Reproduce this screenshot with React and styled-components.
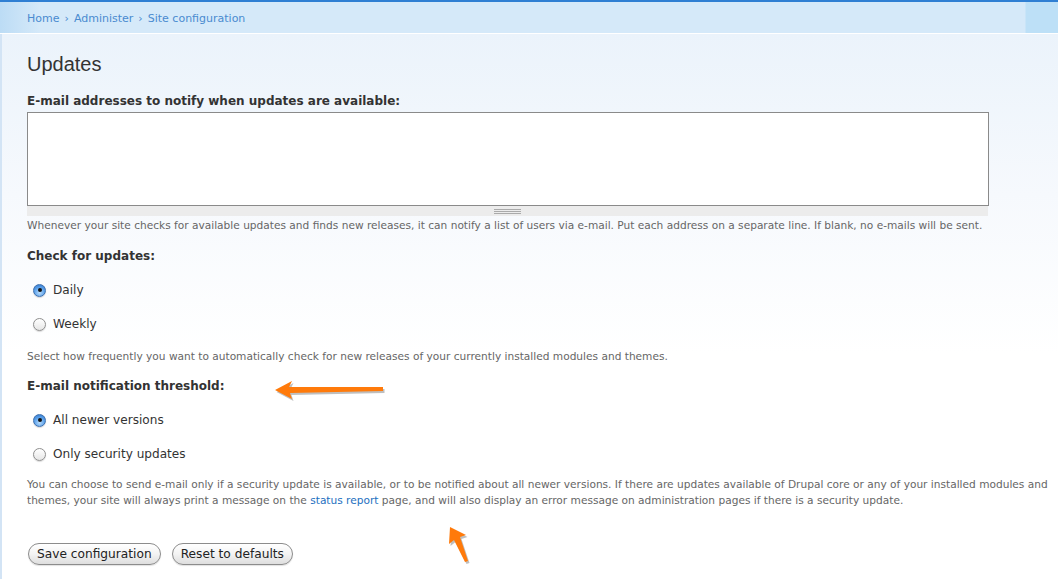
import styled, { createGlobalStyle } from "styled-components";

const GlobalStyle = createGlobalStyle`
  body {
    margin: 0;
    background: #fff;
    font-family: "DejaVu Sans", Verdana, sans-serif;
    color: #333;
  }
`;

const Page = styled.div`
  position: relative;
  min-height: 577px;
  border-top: 2px solid #2f7fd3;
  overflow: hidden;
`;

const Crumbs = styled.div`
  height: 30px;
  display: flex;
  align-items: center;
  padding: 1px 0 0 27px;
  border-bottom: 1px solid #fff;
  background: linear-gradient(
    to right,
    #bcdcf5 0,
    #d5e9f9 40px,
    #d5e9f9 1025px,
    #bde0f7 1026px
  );
  font-size: 11px;
  color: #4a8bd0;

  span {
    margin: 0 5px;
  }
`;

const Main = styled.div`
  border-left: 2px solid #d3e4f5;
  padding: 18px 0 20px 25px;
  min-height: 500px;
  background: linear-gradient(#ebf3fb 0, #f6f9fd 160px, #fff 320px);
`;

const Title = styled.h1`
  margin: 0 0 17px;
  font-family: "Liberation Sans", Arial, sans-serif;
  font-weight: normal;
  font-size: 20px;
  line-height: 24px;
  color: #333;
`;

const Label = styled.div`
  font-size: 12px;
  font-weight: bold;
  line-height: 16px;
  color: #333;
  margin-top: ${(p) => p.$top || 0}px;
`;

const TextArea = styled.textarea`
  display: block;
  box-sizing: border-box;
  width: 962px;
  height: 94px;
  margin: 3px 0 0;
  border: 1px solid #8a8a8a;
  background: #fff;
  resize: none;
  outline: none;
`;

const Grippie = styled.div`
  width: 961px;
  height: 10px;
  background: #ececec;
  display: flex;
  justify-content: center;
  align-items: center;

  &::after {
    content: "";
    width: 27px;
    height: 5px;
    border-top: 1px solid #aaa;
    border-bottom: 1px solid #aaa;
    background: linear-gradient(#ececec 1px, #aaa 1px, #aaa 2px, #ececec 2px);
    box-sizing: border-box;
  }
`;

const Desc = styled.p`
  margin: ${(p) => p.$top || 0}px 0 0;
  font-size: 10.6px;
  line-height: 16px;
  color: #666;
  max-width: 1030px;

  a {
    color: #1d6fc0;
    text-decoration: none;
  }
`;

const Options = styled.div`
  display: flex;
  flex-direction: column;
  gap: 18px;
  margin: 18px 0 0 6px;
`;

const Option = styled.label`
  display: flex;
  align-items: center;
  gap: 7px;
  font-size: 12.1px;
  line-height: 16px;
  color: #333;
`;

const Radio = styled.span`
  box-sizing: border-box;
  width: 13px;
  height: 13px;
  border-radius: 50%;
  display: inline-flex;
  align-items: center;
  justify-content: center;
  border: 1px solid ${(p) => (p.$checked ? "#3c6fae" : "#8f8f8f")};
  background: ${(p) =>
    p.$checked
      ? "radial-gradient(circle at 50% 70%, #b9dcfb 0, #5aa0ea 55%, #2f74c9 100%)"
      : "linear-gradient(#ffffff, #e6e6e6)"};
  box-shadow: 0 1px 1px rgba(0, 0, 0, 0.15);

  &::after {
    content: "";
    display: ${(p) => (p.$checked ? "block" : "none")};
    width: 4px;
    height: 4px;
    border-radius: 50%;
    background: #111;
  }
`;

const Actions = styled.div`
  display: flex;
  gap: 11px;
  margin: 35px 0 0 1px;
`;

const Button = styled.button`
  height: 22px;
  padding: 0 8px;
  border: 1px solid #8c8c8c;
  border-radius: 11px;
  background: linear-gradient(#ffffff 0, #f3f3f3 50%, #dedede 100%);
  font-family: "DejaVu Sans", Verdana, sans-serif;
  font-size: 12.2px;
  color: #222;
  box-shadow: 0 1px 1px rgba(0, 0, 0, 0.12);
`;

const Pointer = styled.svg`
  position: absolute;
  left: ${(p) => p.$x}px;
  top: ${(p) => p.$y}px;
  overflow: visible;
`;

const ArrowShape = ({ points }) => (
  <>
    <polygon points={points} fill="#000" opacity="0.25" transform="translate(1.5 2)" />
    <polygon points={points} fill="#ff7a0a" />
  </>
);

const RadioGroup = ({ items, value }) => (
  <Options>
    {items.map((item) => (
      <Option key={item}>
        <Radio $checked={item === value} />
        {item}
      </Option>
    ))}
  </Options>
);

const App = () => {
  return (
    <Page>
      <GlobalStyle />
      <Crumbs>
        Home<span>›</span>Administer<span>›</span>Site configuration
      </Crumbs>
      <Main>
        <Title>Updates</Title>
        <Label>E-mail addresses to notify when updates are available:</Label>
        <TextArea />
        <Grippie />
        <Desc $top={1}>
          Whenever your site checks for available updates and finds new releases, it can
          notify a list of users via e-mail. Put each address on a separate line. If blank, no
          e-mails will be sent.
        </Desc>

        <Label $top={15}>Check for updates:</Label>
        <RadioGroup items={["Daily", "Weekly"]} value="Daily" />
        <Desc $top={16}>
          Select how frequently you want to automatically check for new releases of your
          currently installed modules and themes.
        </Desc>

        <Label $top={14}>E-mail notification threshold:</Label>
        <RadioGroup
          items={["All newer versions", "Only security updates"]}
          value="All newer versions"
        />
        <Desc $top={14}>
          You can choose to send e-mail only if a security update is available, or to be
          notified about all newer versions. If there are updates available of Drupal core or
          any of your installed modules and
          <br />
          themes, your site will always print a message on the{" "}
          <a href="#status">status report</a> page, and will also display an error message on
          administration pages if there is a security update.
        </Desc>

        <Actions>
          <Button>Save configuration</Button>
          <Button>Reset to defaults</Button>
        </Actions>
      </Main>

      <Pointer $x={270} $y={372} width="120" height="30">
        <ArrowShape points="5,16 22,7 19,13 113,13 113,17 20,19 22,25" />
      </Pointer>
      <Pointer $x={440} $y={518} width="40" height="50">
        <ArrowShape points="10,7 26,15 20,17 28,41 25,42 14,20 9,24" />
      </Pointer>
    </Page>
  );
};

export default App;
